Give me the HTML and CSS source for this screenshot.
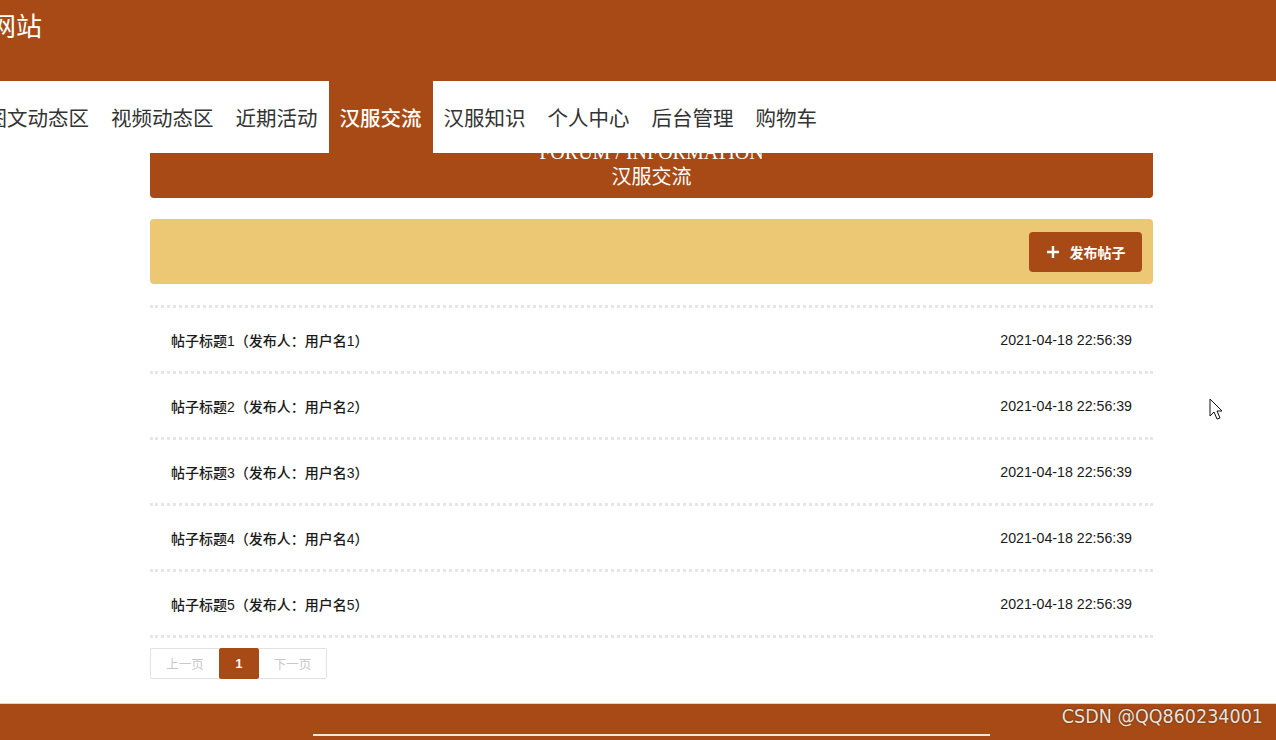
FILE: index.html
```html
<!DOCTYPE html>
<html lang="zh">
<head>
<meta charset="utf-8">
<title>汉服交流</title>
<link rel="stylesheet" href="styles.css">
</head>
<body>
<header class="top">
  <div class="brand">网站</div>
</header>
<nav class="nav">
  <ul class="nav-list">
    <li class="nav-item">图文动态区</li>
    <li class="nav-item">视频动态区</li>
    <li class="nav-item">近期活动</li>
    <li class="nav-item active">汉服交流</li>
    <li class="nav-item">汉服知识</li>
    <li class="nav-item">个人中心</li>
    <li class="nav-item">后台管理</li>
    <li class="nav-item">购物车</li>
  </ul>
</nav>
<main class="main">
  <section class="banner">
    <div class="banner-en">FORUM / INFORMATION</div>
    <div class="banner-cn">汉服交流</div>
  </section>
  <div class="toolbar">
    <button class="publish">
      <svg class="plus" viewBox="0 0 14 14" width="14" height="14"><path d="M7 1v12M1 7h12" stroke="#fff" stroke-width="2.4" fill="none"/></svg>
      <span>发布帖子</span>
    </button>
  </div>
  <ul class="posts">
    <li class="post"><span class="post-title">帖子标题1（发布人：用户名1）</span><span class="post-time">2021-04-18 22:56:39</span></li>
    <li class="post"><span class="post-title">帖子标题2（发布人：用户名2）</span><span class="post-time">2021-04-18 22:56:39</span></li>
    <li class="post"><span class="post-title">帖子标题3（发布人：用户名3）</span><span class="post-time">2021-04-18 22:56:39</span></li>
    <li class="post"><span class="post-title">帖子标题4（发布人：用户名4）</span><span class="post-time">2021-04-18 22:56:39</span></li>
    <li class="post"><span class="post-title">帖子标题5（发布人：用户名5）</span><span class="post-time">2021-04-18 22:56:39</span></li>
  </ul>
  <div class="pager">
    <span class="pg pg-text">上一页</span>
    <span class="pg pg-cur">1</span>
    <span class="pg pg-text">下一页</span>
  </div>
</main>
<footer class="footer">
  <div class="footer-line"></div>
  <div class="watermark">CSDN @QQ860234001</div>
</footer>
<svg class="cursor" viewBox="0 0 16 24" width="16" height="24"><path d="M1 1 L1 18 L5 14 L8 21 L11 20 L8 13 L13 13 Z" fill="#fff" stroke="#111" stroke-width="1"/></svg>
</body>
</html>
```
FILE: styles.css
```css
* { box-sizing: border-box; }
html, body { margin: 0; padding: 0; }
body {
  width: 1276px;
  height: 740px;
  overflow: hidden;
  background: #fff;
  font-family: "Noto Sans CJK SC", "Liberation Sans", sans-serif;
  position: relative;
}
.top {
  height: 81px;
  background: #a84a15;
}
.brand {
  color: #fff;
  font-size: 26px;
  line-height: 30px;
  padding-top: 10px;
  margin-left: -10px;
}
.nav {
  height: 72px;
  background: #fff;
  position: relative;
  z-index: 2;
}
.nav-list {
  list-style: none;
  margin: 0 0 0 -24.5px;
  padding: 0;
  display: flex;
  height: 72px;
}
.nav-item {
  height: 72px;
  padding: 0 11px;
  display: flex;
  align-items: center;
  font-size: 20.5px;
  color: #333;
  white-space: nowrap;
}
.nav-item.active {
  background: #a84a15;
  color: #fff;
  font-weight: 500;
}
.main {
  width: 1003px;
  margin-left: 150px;
}
.banner {
  margin-top: -33px;
  background: #a84a15;
  border-radius: 0 0 4px 4px;
  color: #fff;
  text-align: center;
  padding: 21px 0 10px;
}
.banner-en {
  font-family: "Liberation Serif", serif;
  font-size: 20px;
  line-height: 23px;
}
.banner-cn {
  font-size: 20px;
  line-height: 24px;
}
.toolbar {
  margin-top: 21px;
  height: 65px;
  background: #edc874;
  border-radius: 4px;
  display: flex;
  justify-content: flex-end;
  align-items: center;
  padding-right: 11px;
}
.publish {
  height: 40px;
  width: 113px;
  background: #a84a15;
  border: none;
  border-radius: 4px;
  color: #fff;
  font-family: "Noto Sans CJK SC", sans-serif;
  font-size: 14px;
  font-weight: 700;
  display: flex;
  align-items: center;
  justify-content: center;
  gap: 10px;
  padding: 0;
  margin-top: 1px;
}
.plus { display: block; }
.posts {
  list-style: none;
  margin: 21px 0 0;
  padding: 0;
  border-bottom: 3px dotted #e6e6e6;
}
.post {
  height: 66px;
  border-top: 3px dotted #e6e6e6;
  display: flex;
  justify-content: space-between;
  align-items: center;
  padding: 0 21px;
  color: #1a1a1a;
}
.post-title {
  font-family: "Liberation Sans", "Noto Sans CJK SC", sans-serif;
  font-size: 14px;
  font-weight: 500;
}
.post-time {
  font-family: "Liberation Sans", sans-serif;
  font-size: 14.2px;
}
.pager {
  display: flex;
  margin-top: 10px;
  height: 31px;
}
.pg {
  display: flex;
  align-items: center;
  justify-content: center;
  font-size: 12.5px;
  height: 31px;
}
.pg-text {
  width: 69px;
  border: 1px solid #e2e2e2;
  color: #c8c8c8;
}
.pg-text:first-child { border-radius: 2px 0 0 2px; border-right: none; }
.pg-text:last-child { border-radius: 0 2px 2px 0; border-left: none; width: 68px; }
.pg-cur {
  width: 40px;
  background: #a84a15;
  color: #fff;
  font-weight: 700;
  font-family: "Liberation Sans", sans-serif;
  border-radius: 2px;
}
.footer {
  position: absolute;
  left: 0;
  right: 0;
  top: 703px;
  height: 37px;
  background: #a84a15;
  border-top: 1px solid #f0d2b6;
}
.footer-line {
  position: absolute;
  left: 313px;
  width: 677px;
  top: 30px;
  height: 2px;
  background: #f7e6d4;
}
.watermark {
  position: absolute;
  right: 13px;
  top: 1px;
  font-family: "DejaVu Sans Condensed", "DejaVu Sans", sans-serif;
  font-stretch: condensed;
  font-size: 19.5px;
  color: #e6e2de;
  text-shadow: 0 0 2px rgba(0,0,0,0.55);
  white-space: nowrap;
}
.cursor {
  position: absolute;
  left: 1209px;
  top: 398px;
}
```
